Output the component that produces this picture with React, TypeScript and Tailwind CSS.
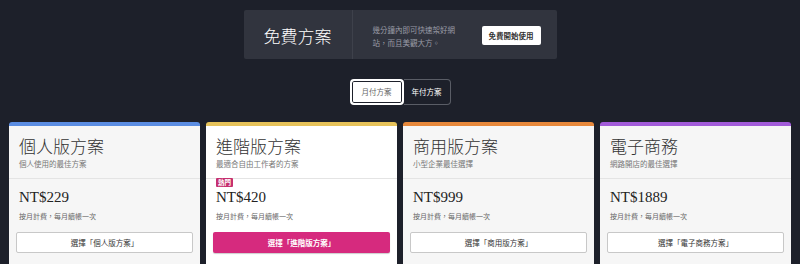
import React from "react";

const cjk = { fontFamily: '"Noto Sans CJK TC", "Noto Sans", sans-serif' };
const serif = { fontFamily: '"Liberation Serif", "Noto Sans CJK TC", serif' };

type Plan = {
  name: string;
  sub: string;
  price: string;
  bar: string;
  bg: string;
  hot?: boolean;
  btn: string;
};

const plans: Plan[] = [
  { name: "個人版方案", sub: "個人使用的最佳方案", price: "NT$229", bar: "border-[#5b8de2]", bg: "bg-[#f6f6f6]", btn: "選擇「個人版方案」" },
  { name: "進階版方案", sub: "最適合自由工作者的方案", price: "NT$420", bar: "border-[#e6c25a]", bg: "bg-white", hot: true, btn: "選擇「進階版方案」" },
  { name: "商用版方案", sub: "小型企業最佳選擇", price: "NT$999", bar: "border-[#e7883b]", bg: "bg-[#f6f6f6]", btn: "選擇「商用版方案」" },
  { name: "電子商務", sub: "網路開店的最佳選擇", price: "NT$1889", bar: "border-[#a25bd9]", bg: "bg-[#f6f6f6]", btn: "選擇「電子商務方案」" },
];

function Card({ p }: { p: Plan }) {
  return (
    <div className={`relative flex flex-col rounded-t-[3px] border-t-4 ${p.bar} ${p.bg}`} style={cjk}>
      <div className="border-b border-[#e4e4e4] px-[10px] pt-[8px] pb-[8px]">
        <div className="text-[17px] font-light leading-[24px] text-[#333]">{p.name}</div>
        <div className="text-[7.5px] leading-[12px] text-[#777]">{p.sub}</div>
      </div>
      {p.hot && (
        <div className="absolute left-[10px] top-[52px] rounded-[1px] bg-[#c6306f] px-[2px] text-[6.5px] font-bold leading-[9px] text-white">
          熱門
        </div>
      )}
      <div className="px-[7px] pt-[8px]">
        <div className="px-[3px] text-[15px] leading-[20px] text-[#222]" style={serif}>
          {p.price}
        </div>
        <div className="mt-[3px] px-[3px] text-[7px] leading-[12px] text-[#666]">按月計費，每月續帳一次</div>
        {p.hot ? (
          <div className="mt-[10px] flex h-[21px] items-center justify-center rounded-[2px] bg-[#d62a7e] text-[7.5px] font-bold text-white shadow-[0_1px_1px_rgba(0,0,0,0.2)]">
            {p.btn}
          </div>
        ) : (
          <div className="mt-[10px] flex h-[21px] items-center justify-center rounded-[2px] border border-[#c8c8c8] bg-white text-[7.5px] text-[#333]">
            {p.btn}
          </div>
        )}
      </div>
      <div className="h-[20px]" />
    </div>
  );
}

export default function App() {
  return (
    <div className="h-[264px] w-[800px] overflow-hidden bg-[#1d202a]" style={cjk}>
      <div className="flex justify-center pt-[10px]">
        <div className="flex h-[49px] w-[313px] rounded-[2px] bg-[#31343e]">
          <div className="flex w-[109px] items-center justify-center border-r border-[#3e414b] pt-[3px] text-[17px] font-light text-white">
            免費方案
          </div>
          <div className="flex flex-1 items-center justify-between pl-[20px] pr-[16px] pt-[2px]">
            <div className="w-[86px] text-[7.5px] leading-[13px] text-[#9a9ca6]">
              幾分鐘內即可快速架好網站，而且美觀大方。
            </div>
            <div className="flex h-[19px] w-[59px] items-center justify-center rounded-[2px] bg-white text-[7.5px] font-bold text-[#333]">
              免費開始使用
            </div>
          </div>
        </div>
      </div>
      <div className="mt-[20px] flex justify-center">
        <div className="flex">
          <div className="flex h-[26px] w-[54px] items-center justify-center rounded-[4px] border-2 border-white bg-white text-[7.5px] text-[#666] shadow-[inset_0_0_0_1px_#1d202a]">
            月付方案
          </div>
          <div className="flex h-[26px] w-[47px] items-center justify-center rounded-r-[4px] border border-l-0 border-[#5a5d66] text-[7.5px] text-white">
            年付方案
          </div>
        </div>
      </div>
      <div className="mt-[17px] grid grid-cols-4 gap-[6px] px-[9px]">
        {plans.map((p) => (
          <Card key={p.name} p={p} />
        ))}
      </div>
    </div>
  );
}
